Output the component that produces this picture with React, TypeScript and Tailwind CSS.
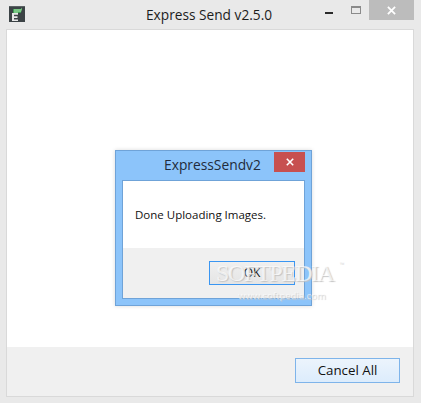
const font = { fontFamily: '"Open Sans", "Noto Sans", sans-serif' };

const AppIcon = () => (
  <svg width="16" height="16" viewBox="0 0 16 16" className="block">
    <rect width="16" height="16" fill="#3c4346" />
    <rect x="0" y="0" width="16" height="1" fill="#5a6163" />
    <rect x="4" y="3" width="8" height="4" fill="#3f9a55" />
    <path d="M5 3h7V1.500L12.500 2 13 3.500 12 6H9V7H5z" fill="#79c884" />
    <path d="M3 7h6v1.800H5v1.500h3.500V12H5v1.500h4V15H3z" fill="#e8e8e8" />
  </svg>
);

const CloseGlyph = ({ size }: { size: number }) => (
  <svg width={size} height={size} viewBox="0 0 10 10" className="block">
    <path d="M1 1l8 8M9 1l-8 8" stroke="#ffffff" strokeWidth="2" fill="none" />
  </svg>
);

const TitleBar = () => (
  <div className="flex h-[29px] shrink-0">
    <div className="pl-[9px] pt-[6px] w-[146px]">
      <AppIcon />
    </div>
    <div className="w-[127px] pt-[5px] text-[13.700px] leading-[20px] text-[#1c1c1c] whitespace-nowrap">
      Express Send v2.5.0
    </div>
    <div className="w-[78px] pl-[52px] pt-[12px]">
      <div className="w-[8px] h-[2px] bg-[#2a2a2a]" />
    </div>
    <div className="pt-[6px]">
      <div className="w-[10px] h-[8px] border border-[#8a8a8a] border-t-[2px]" />
    </div>
  </div>
);

const Dialog = () => (
  <div className="flex flex-col w-[197px] h-[156px] bg-[#8cc4fa] border border-[#6fa3d8] shadow-[0_0_4px_rgba(0,0,0,0.15)]">
    <div className="flex h-[29px] shrink-0">
      <div className="flex-1 pl-[48px] pt-[4px] text-[13.800px] leading-[20px] text-[#222c3c] whitespace-nowrap">
        ExpressSendv2
      </div>
      <div className="flex items-center justify-center w-[31px] h-[20px] mr-[6px] mt-[1px] bg-[#c75050]">
        <CloseGlyph size={8} />
      </div>
    </div>
    <div className="flex flex-col mx-[6px] h-[119px] border border-[#6fa3d8] bg-white">
      <div className="flex-1 pl-[12px] pt-[26px] text-[11.500px] leading-[16px] text-[#111111]">
        Done Uploading Images.
      </div>
      <div className="flex justify-end h-[50px] bg-[#f0f0f0] pt-[13px] pr-[9px]">
        <div className="flex items-center justify-center w-[86px] h-[24px] border border-[#3a96f2] bg-gradient-to-b from-[#f0f0f0] to-[#e5e5e5] text-[12px] text-[#111111]">
          OK
        </div>
      </div>
    </div>
  </div>
);

export default function App() {
  return (
    <div className="relative flex flex-col w-[421px] h-[403px] overflow-hidden bg-[#e9e9e9]" style={font}>
      <TitleBar />
      <div className="flex flex-col mx-[6px] w-[408px] h-[368px] border border-[#d9d9d9]">
        <div className="h-[317px] bg-white pl-[108px] pt-[120px]">
          <Dialog />
        </div>
        <div className="flex justify-end flex-1 bg-[#f0f0f0] pt-[11px] pr-[13px]">
          <div className="flex items-center justify-center w-[105px] h-[25px] border border-[#7eb4ea] bg-gradient-to-b from-[#ecf4fc] to-[#dcecfc] text-[13.300px] text-[#111111]">
            Cancel All
          </div>
        </div>
      </div>
      <div className="absolute right-[7px] top-0 flex items-center justify-center w-[45px] h-[20px] bg-[#bcbcbc]">
        <CloseGlyph size={9} />
      </div>
      <div className="absolute left-[216px] top-[259px] text-[24px] leading-[28px] tracking-[-1.300px] text-white/70 [text-shadow:1px_1px_1px_#c4c4c4] whitespace-nowrap" style={{ fontFamily: '"Liberation Serif", serif' }}>
        SOFTPEDIA
      </div>
      <div className="absolute left-[340px] top-[261px] text-[6px] leading-[8px] text-[#dddddd]">™</div>
      <div className="absolute left-[238px] top-[290px] text-[9.500px] leading-[12px] text-white/60 [text-shadow:1px_1px_1px_#c8c8c8] whitespace-nowrap">
        www.softpedia.com
      </div>
    </div>
  );
}
